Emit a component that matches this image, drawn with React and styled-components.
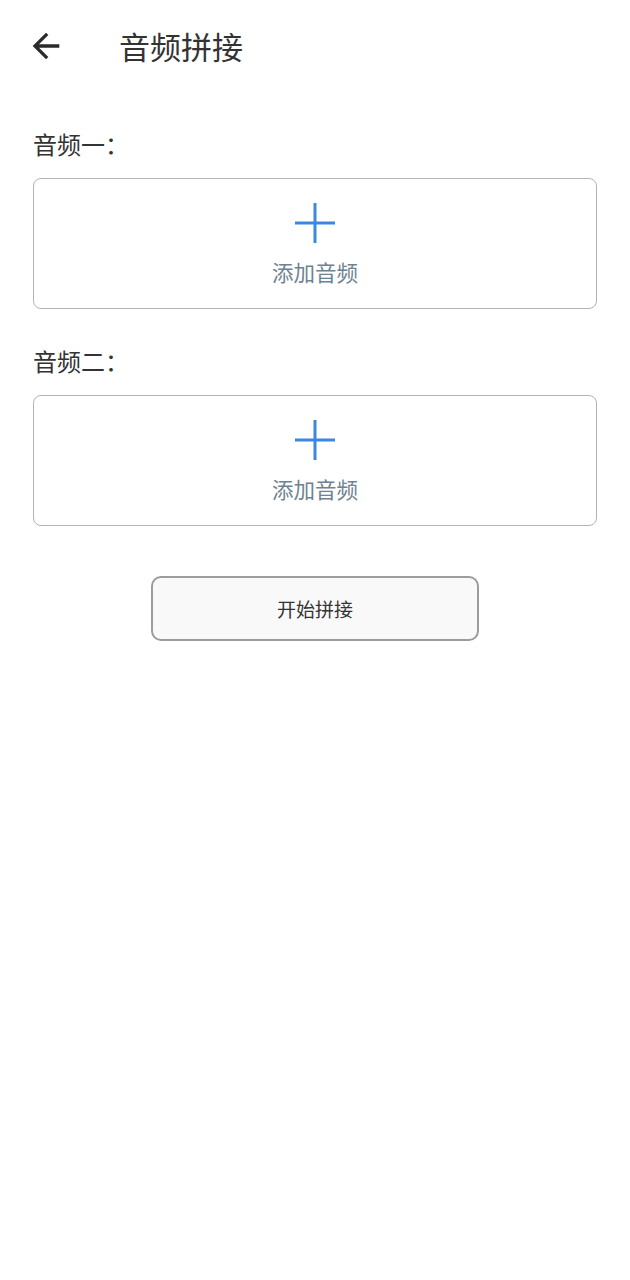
import React from "react";
import styled, { createGlobalStyle } from "styled-components";

const Global = createGlobalStyle`
  html, body { margin: 0; padding: 0; background: #ffffff; }
  body { font-family: "Noto Sans CJK SC", "Noto Sans", sans-serif; color: #333; }
  * { box-sizing: border-box; }
`;

const Page = styled.div`
  width: 630px;
  min-height: 1280px;
  background: #fff;
  display: flex;
  flex-direction: column;
`;

const Header = styled.header`
  height: 92px;
  display: flex;
  align-items: center;
  padding: 0 26px;
`;

const BackButton = styled.button`
  width: 40px;
  height: 40px;
  padding: 0;
  border: none;
  background: none;
  display: flex;
  align-items: center;
  justify-content: center;
  color: #2b2b2b;
  cursor: pointer;
`;

const Title = styled.h1`
  margin: 0 0 0 53px;
  font-size: 31px;
  font-weight: 400;
  color: #333;
  line-height: 40px;
`;

const Content = styled.main`
  padding: 0 33px;
  display: flex;
  flex-direction: column;
`;

const Label = styled.div`
  margin-top: ${(p) => p.$top}px;
  font-size: 24px;
  line-height: 32px;
  color: #333;
`;

const DropBox = styled.div`
  margin-top: 18px;
  height: 131px;
  border: 1px solid #b3b3b3;
  border-radius: 8px;
  display: flex;
  flex-direction: column;
  align-items: center;
  padding-top: 24px;
  cursor: pointer;
`;

const AddText = styled.div`
  margin-top: 14px;
  font-size: 21.5px;
  line-height: 30px;
  color: #6e8290;
`;

const ActionButton = styled.button`
  align-self: center;
  margin-top: 50px;
  width: 328px;
  height: 65px;
  border: 2px solid #9c9c9c;
  border-radius: 10px;
  background: #f9f9f9;
  font-family: "Noto Sans CJK SC", "Noto Sans", sans-serif;
  font-size: 19px;
  color: #333;
  cursor: pointer;
`;

const BackIcon = () => (
  <svg width="40" height="40" viewBox="0 0 24 24" fill="currentColor">
    <path d="M20 11H7.83l5.59-5.59L12 4l-8 8 8 8 1.41-1.41L7.83 13H20v-2z" />
  </svg>
);

const PlusIcon = () => (
  <svg width="40" height="40" viewBox="0 0 40 40" fill="none" stroke="#3a86e0" strokeWidth="3">
    <line x1="20" y1="0" x2="20" y2="40" />
    <line x1="0" y1="20" x2="40" y2="20" />
  </svg>
);

const AudioSlot = ({ label, top }) => (
  <>
    <Label $top={top}>{label}</Label>
    <DropBox>
      <PlusIcon />
      <AddText>添加音频</AddText>
    </DropBox>
  </>
);

export default function App() {
  return (
    <Page>
      <Global />
      <Header>
        <BackButton aria-label="返回">
          <BackIcon />
        </BackButton>
        <Title>音频拼接</Title>
      </Header>
      <Content>
        <AudioSlot label="音频一：" top={36} />
        <AudioSlot label="音频二：" top={36} />
        <ActionButton>开始拼接</ActionButton>
      </Content>
    </Page>
  );
}
